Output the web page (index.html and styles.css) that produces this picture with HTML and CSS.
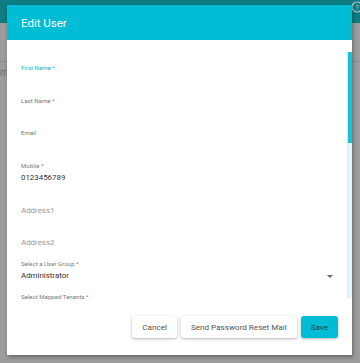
FILE: index.html
```html
<!DOCTYPE html>
<html lang="en">
<head>
    <meta charset="UTF-8">
    <meta name="viewport" content="width=device-width, initial-scale=1.0">
    <title>Edit User</title>
    <link rel="stylesheet" href="styles.css">
</head>
<body>
    <div class="backdrop">
        <div class="app-bar">
            <svg class="help-icon" width="12" height="12" viewBox="0 0 12 12">
                <circle cx="6" cy="6" r="5" fill="none" stroke="#b9c9ca" stroke-width="1.2"/>
                <text x="6" y="8.6" text-anchor="middle" font-family="Roboto, sans-serif" font-size="7.5" fill="#b9c9ca">?</text>
            </svg>
        </div>
        <div class="page-row"></div>
        <div class="page-text">m</div>
    </div>

    <div class="dialog">
        <div class="dialog-title">Edit User</div>

        <div class="dialog-body">
            <div class="field focused">
                <label>First Name *</label>
                <div class="value"></div>
            </div>
            <div class="field">
                <label>Last Name *</label>
                <div class="value"></div>
            </div>
            <div class="field">
                <label>Email</label>
                <div class="value"></div>
            </div>
            <div class="field">
                <label>Mobile *</label>
                <div class="value">0123456789</div>
            </div>
            <div class="field">
                <label></label>
                <div class="value placeholder">Address1</div>
            </div>
            <div class="field">
                <label></label>
                <div class="value placeholder">Address2</div>
            </div>
            <div class="field">
                <label>Select a User Group *</label>
                <div class="value select">
                    <span>Administrator</span>
                    <span class="caret"></span>
                </div>
            </div>
            <div class="field">
                <label>Select Mapped Tenants *</label>
                <div class="value"></div>
            </div>

            <div class="scrollbar">
                <div class="scroll-thumb"></div>
            </div>
        </div>

        <div class="dialog-actions">
            <button class="btn">Cancel</button>
            <button class="btn">Send Password Reset Mail</button>
            <button class="btn btn-primary">Save</button>
        </div>
    </div>
</body>
</html>
```

FILE: styles.css
```css
body {
    margin: 0;
    width: 360px;
    height: 363px;
    overflow: hidden;
    font-family: Roboto, 'Liberation Sans', sans-serif;
    background-color: #9c9c9c;
    position: relative;
}

.backdrop {
    height: 100%;
}

.app-bar {
    height: 23px;
    background-color: #0f7c83;
    display: flex;
    justify-content: flex-end;
    align-items: flex-start;
}

.help-icon {
    margin-top: 1px;
    margin-right: -3px;
}

.page-row {
    height: 38px;
    border-bottom: 1px solid #8c8c8c;
}

.page-text {
    font-size: 10px;
    color: #6e6e6e;
    margin-left: 0;
    margin-top: 5px;
}

.dialog {
    position: absolute;
    left: 7px;
    top: 5px;
    width: 345px;
    height: 350px;
    background: #fff;
    display: flex;
    flex-direction: column;
    box-shadow: 1px 2px 4px rgba(0, 0, 0, 0.35);
}

.dialog-title {
    height: 35px;
    background-color: #00bcd4;
    color: #fff;
    font-size: 11.5px;
    padding-left: 14px;
    display: flex;
    align-items: center;
    flex-shrink: 0;
}

.dialog-body {
    position: relative;
    height: 260px;
    padding: 24px 14px 0 14px;
    box-sizing: border-box;
    overflow: hidden;
    flex-shrink: 0;
}

.field {
    height: 32.7px;
}

.field label {
    display: block;
    height: 8px;
    line-height: 8px;
    font-size: 6.1px;
    color: #7a7a7a;
}

.field.focused label {
    color: #00bcd4;
}

.value {
    margin-top: 3px;
    height: 10px;
    line-height: 10px;
    font-size: 7.9px;
    color: #333;
}

.value.placeholder {
    color: #9a9a9a;
}

.select {
    display: flex;
    justify-content: space-between;
    align-items: center;
    padding-right: 5px;
}

.caret {
    width: 0;
    height: 0;
    border-left: 3px solid transparent;
    border-right: 3px solid transparent;
    border-top: 3px solid #666;
}

.scrollbar {
    position: absolute;
    right: 0;
    top: 12px;
    width: 5px;
    height: 246px;
    background-color: #e3f7fa;
    border-left: 1px solid #c8eef3;
    box-sizing: border-box;
}

.scroll-thumb {
    height: 91px;
    background-color: #17c2d6;
}

.dialog-actions {
    flex: 1;
    display: flex;
    justify-content: flex-end;
    align-items: center;
    gap: 4px;
    padding: 0 14px 2px 0;
}

.btn {
    height: 22px;
    padding: 0 10px;
    border: none;
    border-radius: 3px;
    background: #fff;
    color: #555;
    font-family: Roboto, 'Liberation Sans', sans-serif;
    font-size: 8.1px;
    box-shadow: 0 1px 3px rgba(0, 0, 0, 0.3);
    cursor: pointer;
}

.btn-primary {
    background-color: #00bcd4;
    color: #114a55;
}
```
